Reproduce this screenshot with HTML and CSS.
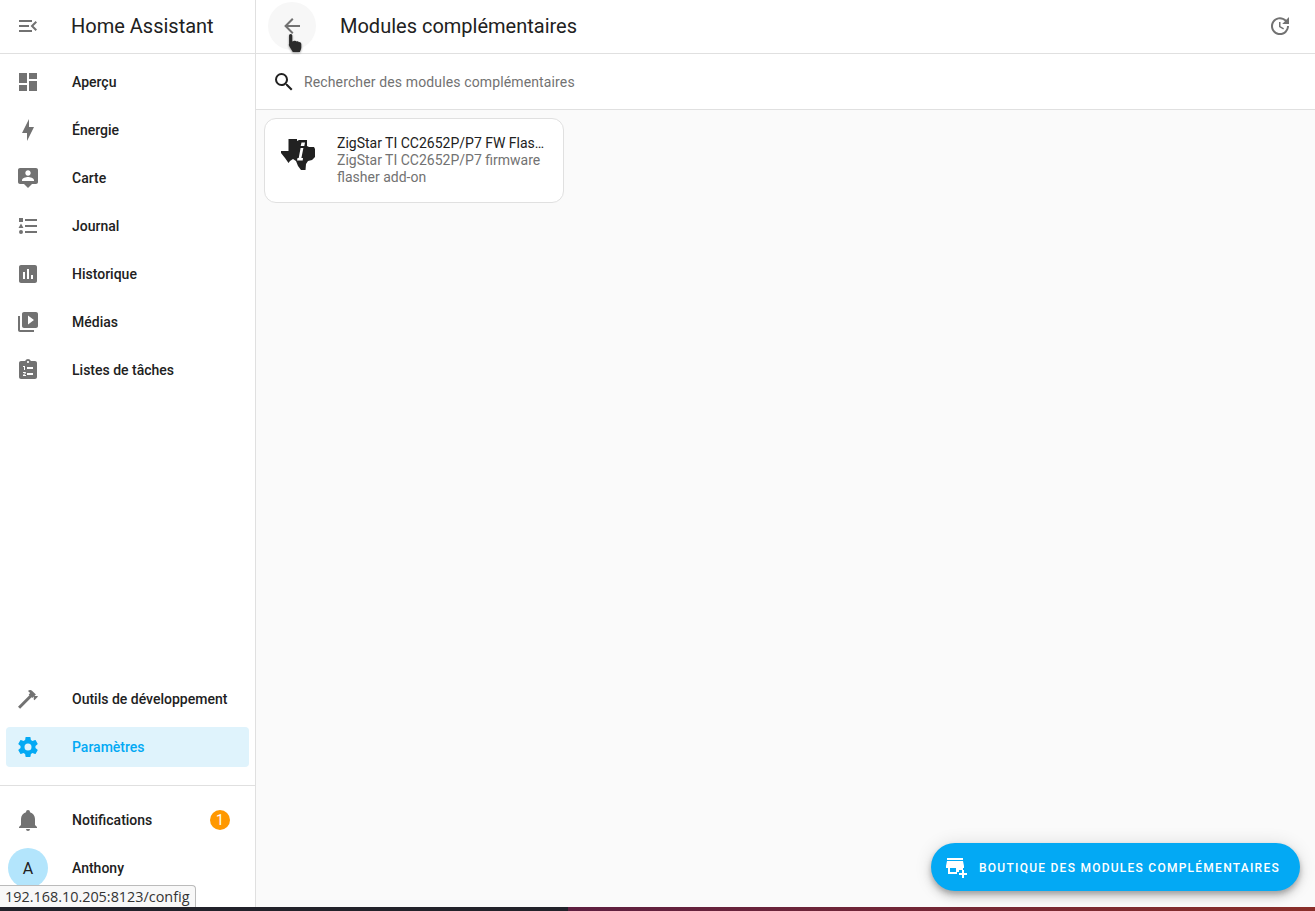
FILE: index.html
```html
<!DOCTYPE html>
<html lang="fr">
<head>
    <meta charset="UTF-8">
    <title>Modules complémentaires</title>
    <link rel="stylesheet" href="styles.css">
</head>
<body>
    <div class="app">
        <aside class="sidebar">
            <div class="menu-head">
                <svg class="icon" viewBox="0 0 24 24"><path d="M21 15.61L19.59 17L14.58 12L19.59 7L21 8.39L17.44 12L21 15.61M3 6H16V8H3V6M3 13V11H13V13H3M3 18V16H16V18H3Z"/></svg>
                <span class="menu-title">Home Assistant</span>
            </div>
            <nav class="nav-main">
                <a class="nav-item"><svg class="icon" viewBox="0 0 24 24"><path d="M13,3V9H21V3M13,21H21V11H13M3,21H11V15H3M3,13H11V3H3V13Z"/></svg><span>Aperçu</span></a>
                <a class="nav-item"><svg class="icon" viewBox="0 0 24 24"><path d="M11 15H6L13 1V9H18L11 23V15Z"/></svg><span>Énergie</span></a>
                <a class="nav-item"><svg class="icon" viewBox="0 0 24 24"><path d="M20 2H4C2.9 2 2 2.9 2 4V16C2 17.1 2.9 18 4 18H8L12 22L16 18H20C21.1 18 22 17.1 22 16V4C22 2.9 21.1 2 20 2M12 4.3C13.5 4.3 14.7 5.5 14.7 7C14.7 8.5 13.5 9.7 12 9.7C10.5 9.7 9.3 8.5 9.3 7C9.3 5.5 10.5 4.3 12 4.3M18 15H6V14.1C6 12.1 10 11 12 11C14 11 18 12.1 18 14.1V15Z"/></svg><span>Carte</span></a>
                <a class="nav-item"><svg class="icon" viewBox="0 0 24 24"><path d="M5,9.5L7.5,14H2.5L5,9.5M3,4H7V8H3V4M5,20A2,2 0 0,0 7,18A2,2 0 0,0 5,16A2,2 0 0,0 3,18A2,2 0 0,0 5,20M9,5V7H21V5H9M9,19H21V17H9V19M9,13H21V11H9V13Z"/></svg><span>Journal</span></a>
                <a class="nav-item"><svg class="icon" viewBox="0 0 24 24"><path d="M19 3H5C3.9 3 3 3.9 3 5V19C3 20.1 3.9 21 5 21H19C20.1 21 21 20.1 21 19V5C21 3.9 20.1 3 19 3M9 17H7V10H9V17M13 17H11V7H13V17M17 17H15V13H17V17Z"/></svg><span>Historique</span></a>
                <a class="nav-item"><svg class="icon" viewBox="0 0 24 24"><path d="M4 6H2V20C2 21.1 2.9 22 4 22H18V20H4V6M20 2H8C6.9 2 6 2.9 6 4V16C6 17.1 6.9 18 8 18H20C21.1 18 22 17.1 22 16V4C22 2.9 21.1 2 20 2M12 14.5V5.5L18 10L12 14.5Z"/></svg><span>Médias</span></a>
                <a class="nav-item"><svg class="icon" viewBox="0 0 24 24"><path d="M19 3H14.82C14.4 1.84 13.3 1 12 1S9.6 1.84 9.18 3H5C3.9 3 3 3.9 3 5V19C3 20.1 3.9 21 5 21H19C20.1 21 21 20.1 21 19V5C21 3.9 20.1 3 19 3M12 3C12.55 3 13 3.45 13 4S12.55 5 12 5 11 4.55 11 4 11.45 3 12 3M7 8H9V12H8V9H7V8M10 17V18H7V17.08L9 15H7V14H9.25C9.66 14 10 14.34 10 14.75C10 14.95 9.92 15.14 9.79 15.27L8.12 17H10M11 9H17V11H11V9M17 17H11V15H17V17Z"/></svg><span>Listes de tâches</span></a>
            </nav>
            <div class="nav-tools">
                <a class="nav-item"><svg class="icon" viewBox="0 0 24 24"><path d="M2 19.63L13.43 8.2L12.72 7.5L14.14 6.07L12 3.89C13.2 2.7 15.09 2.7 16.27 3.89L19.87 7.5L18.45 8.91H21.29L22 9.62L18.45 13.21L17.74 12.5V9.62L16.27 11.04L15.56 10.33L4.13 21.76L2 19.63Z"/></svg><span>Outils de développement</span></a>
                <a class="nav-item active"><svg class="icon" viewBox="0 0 24 24"><path d="M12,15.5A3.5,3.5 0 0,1 8.5,12A3.5,3.5 0 0,1 12,8.5A3.5,3.5 0 0,1 15.5,12A3.5,3.5 0 0,1 12,15.5M19.43,12.97C19.47,12.65 19.5,12.33 19.5,12C19.5,11.67 19.47,11.34 19.43,11L21.54,9.37C21.73,9.22 21.78,8.95 21.66,8.73L19.66,5.27C19.54,5.05 19.27,4.96 19.05,5.05L16.56,6.05C16.04,5.66 15.5,5.32 14.87,5.07L14.5,2.42C14.46,2.18 14.25,2 14,2H10C9.75,2 9.54,2.18 9.5,2.42L9.13,5.07C8.5,5.32 7.96,5.66 7.44,6.05L4.95,5.05C4.73,4.96 4.46,5.05 4.34,5.27L2.34,8.73C2.21,8.95 2.27,9.22 2.46,9.37L4.57,11C4.53,11.34 4.5,11.67 4.5,12C4.5,12.33 4.53,12.65 4.57,12.97L2.46,14.63C2.27,14.78 2.21,15.05 2.34,15.27L4.34,18.73C4.46,18.95 4.73,19.03 4.95,18.95L7.44,17.94C7.96,18.34 8.5,18.68 9.13,18.93L9.5,21.58C9.54,21.82 9.75,22 10,22H14C14.25,22 14.46,21.82 14.5,21.58L14.87,18.93C15.5,18.67 16.04,18.34 16.56,17.94L19.05,18.95C19.27,19.03 19.54,18.95 19.66,18.73L21.66,15.27C21.78,15.05 21.73,14.78 21.54,14.63L19.43,12.97Z"/></svg><span>Paramètres</span></a>
            </div>
            <div class="nav-bottom">
                <a class="nav-item"><svg class="icon" viewBox="0 0 24 24"><path d="M21,19V20H3V19L5,17V11C5,7.9 7.03,5.17 10,4.29C10,4.19 10,4.1 10,4A2,2 0 0,1 12,2A2,2 0 0,1 14,4C14,4.1 14,4.19 14,4.29C16.97,5.17 19,7.9 19,11V17L21,19M14,21A2,2 0 0,1 12,23A2,2 0 0,1 10,21"/></svg><span>Notifications</span><span class="badge">1</span></a>
                <a class="nav-item user"><span class="avatar">A</span><span>Anthony</span></a>
            </div>
        </aside>
        <main class="content">
            <header class="topbar">
                <button class="back-btn"><svg class="icon" viewBox="0 0 24 24"><path d="M20,11V13H8L13.5,18.5L12.08,19.92L4.16,12L12.08,4.08L13.5,5.5L8,11H20Z"/></svg></button>
                <h1>Modules complémentaires</h1>
                <svg class="icon" viewBox="0 0 24 24"><path d="M21,10.12H14.22L16.96,7.3C14.23,4.6 9.81,4.5 7.08,7.2C4.35,9.91 4.35,14.28 7.08,17C9.81,19.7 14.23,19.7 16.96,17C18.32,15.65 19,14.08 19,12.1H21C21,14.08 20.12,16.65 18.36,18.39C14.85,21.87 9.15,21.87 5.64,18.39C2.14,14.92 2.11,9.28 5.62,5.81C9.13,2.34 14.76,2.34 18.27,5.81L21,3V10.12M12.5,8V12.25L16,14.33L15.28,15.54L11,13V8H12.5Z"/></svg>
            </header>
            <div class="search">
                <svg class="icon" viewBox="0 0 24 24"><path d="M9.5,3A6.5,6.5 0 0,1 16,9.5C16,11.11 15.41,12.59 14.44,13.73L14.71,14H15.5L20.5,19L19,20.5L14,15.5V14.71L13.73,14.44C12.59,15.41 11.11,16 9.5,16A6.5,6.5 0 0,1 3,9.5A6.5,6.5 0 0,1 9.5,3M9.5,5C7,5 5,7 5,9.5C5,12 7,14 9.5,14C12,14 14,12 14,9.5C14,7 12,5 9.5,5Z"/></svg>
                <span>Rechercher des modules complémentaires</span>
            </div>
            <section class="cards">
                <article class="card">
                    <svg class="logo" viewBox="0 0 34 34"><path d="M7.5 1H16V3L18 2H26V8L28 9H33L34 11V19L31 22L27 23L25 26L24.5 32H20L17 28L15 23L12 21L9 23L7.5 25L4 20L0 15V13H7.5Z"/><path class="logo-i" d="M20.5 4.5H24L23.3 8H19.7ZM19.6 10H22.4L20.4 20H22L21.7 22.5H16L16.5 20H17.7Z"/></svg>
                    <div class="card-text">
                        <div class="card-title">ZigStar TI CC2652P/P7 FW Flasher</div>
                        <div class="card-desc">ZigStar TI CC2652P/P7 firmware flasher add-on</div>
                    </div>
                </article>
            </section>
            <button class="fab">
                <svg class="icon" viewBox="0 0 24 24"><path fill-rule="evenodd" d="M3 4H19V6H3ZM3 7H19L20 12V14H19V16H15V18H13V20H4V14H2V12ZM6 14V18H12V14ZM18 16H20V19H23V21H20V24H18V21H15V19H18Z"/></svg>
                <span>Boutique des modules complémentaires</span>
            </button>
        </main>
    </div>
    <svg class="cursor" viewBox="0 0 14 18"><path d="M2.5 0.5C3.5 0.5 4 1.2 4 2V7.5L6 7C7 6.8 7.6 7.2 8 7.6C9 7.2 9.8 7.6 10.2 8.2C11.2 8 12.4 8.8 12.4 10V13C12.4 15 11.6 16 11 17.5H4.5L1.5 12.5C0.8 11.4 0.5 10.6 1 10V2C1 1.2 1.6 0.5 2.5 0.5Z"/></svg>
    <div class="status-link">192.168.10.205:8123/config</div>
    <div class="desktop-strip"></div>
</body>
</html>
```

FILE: styles.css
```css
* {
    box-sizing: border-box;
}

html, body {
    height: 100%;
}

body {
    margin: 0;
    font-family: Roboto, "Liberation Sans", sans-serif;
    background: #fafafa;
    color: #212121;
    overflow: hidden;
}

.icon {
    width: 24px;
    height: 24px;
    fill: #727272;
    flex-shrink: 0;
}

.app {
    display: flex;
    height: 907px;
}

.sidebar {
    width: 256px;
    display: flex;
    flex-direction: column;
    background: white;
    border-right: 1px solid #e0e0e0;
    flex-shrink: 0;
}

.menu-head {
    height: 54px;
    display: flex;
    align-items: center;
    padding: 0 0 1px 16px;
    border-bottom: 1px solid #e0e0e0;
}

.menu-title {
    margin-left: 31px;
    font-size: 20px;
}

.nav-main {
    flex: 1;
    display: flex;
    flex-direction: column;
    gap: 8px;
    padding-top: 8px;
}

.nav-item {
    height: 40px;
    margin: 0 6px;
    padding-left: 10px;
    display: flex;
    align-items: center;
    border-radius: 4px;
    font-size: 14px;
    font-weight: 500;
}

.nav-item > span:first-of-type {
    margin-left: 32px;
}

.nav-tools {
    display: flex;
    flex-direction: column;
    gap: 8px;
    padding-bottom: 18px;
    border-bottom: 1px solid #e0e0e0;
}

.nav-item.active {
    background: #dff3fc;
    color: #03a9f4;
}

.active .icon {
    fill: #03a9f4;
}

.nav-bottom {
    display: flex;
    flex-direction: column;
    gap: 8px;
    padding-top: 14px;
    height: 121px;
}

.badge {
    width: 20px;
    height: 20px;
    margin-left: auto;
    margin-right: 19px;
    border-radius: 50%;
    background: #ff9800;
    color: white;
    font-weight: 400;
    text-align: center;
    line-height: 20px;
}

.nav-item.user {
    padding-left: 2px;
}

.nav-item.user > span:first-of-type {
    margin-left: 0;
}

.avatar {
    width: 40px;
    height: 40px;
    margin-right: 24px;
    border-radius: 50%;
    background: #b3e5fc;
    font-size: 16px;
    font-weight: 400;
    display: flex;
    align-items: center;
    justify-content: center;
}

.content {
    flex: 1;
    min-width: 0;
    position: relative;
}

.topbar {
    height: 54px;
    display: flex;
    align-items: center;
    padding: 0 23px 1px 12px;
    background: white;
    border-bottom: 1px solid #e0e0e0;
}

.back-btn {
    width: 48px;
    height: 48px;
    padding: 12px;
    border: 0;
    border-radius: 50%;
    background: #f7f7f7;
}

h1 {
    margin: 0 0 0 24px;
    flex: 1;
    font-size: 20px;
    font-weight: 400;
}

.search {
    height: 56px;
    display: flex;
    align-items: center;
    padding-left: 16px;
    background: white;
    border-bottom: 1px solid #e0e0e0;
    font-size: 14px;
    letter-spacing: 0.13px;
    color: #727272;
}

.search .icon {
    fill: #212121;
    margin-right: 8px;
}

.cards {
    padding: 8px;
}

.card {
    width: 300px;
    height: 85px;
    display: flex;
    padding: 16px;
    background: white;
    border: 1px solid #e0e0e0;
    border-radius: 12px;
}

.logo {
    width: 34px;
    height: 34px;
    margin-top: 3px;
    fill: #212121;
    flex-shrink: 0;
}

.logo-i {
    fill: white;
}

.card-text {
    min-width: 0;
    margin-left: 22px;
    font-size: 14px;
    line-height: 17px;
}

.card-title {
    width: 209px;
    white-space: nowrap;
    overflow: hidden;
    text-overflow: ellipsis;
}

.card-desc {
    color: #727272;
}

.fab {
    position: absolute;
    right: 15px;
    bottom: 16px;
    height: 48px;
    width: 369px;
    display: flex;
    align-items: center;
    padding: 0 20px 0 13px;
    border: 0;
    border-radius: 24px;
    background: #03a9f4;
    color: white;
    font-family: inherit;
    font-size: 12px;
    font-weight: 500;
    letter-spacing: 1.25px;
    text-transform: uppercase;
    box-shadow: 0 3px 5px rgba(0,0,0,0.2), 0 6px 10px rgba(0,0,0,0.14), 0 1px 18px rgba(0,0,0,0.12);
}

.fab span {
    margin-top: 2px;
}

.fab .icon {
    fill: white;
    margin: 0 11px 2px 0;
}

.cursor {
    position: absolute;
    left: 288px;
    top: 33px;
    width: 15px;
    height: 20px;
    fill: #2b2b2b;
    filter: drop-shadow(0 1px 1px rgba(0,0,0,0.4));
}

.status-link {
    position: absolute;
    left: 0;
    bottom: 4px;
    height: 22px;
    padding: 0 5px 0 5px;
    background: #f8f8f8;
    border: 1px solid #bbb;
    border-left: 0;
    border-bottom: 0;
    border-radius: 0 4px 0 0;
    font-family: "Open Sans", sans-serif;
    font-size: 14.4px;
    line-height: 21px;
    color: #333;
}

.desktop-strip {
    height: 4px;
    background: linear-gradient(to right, #22222a 0%, #22222a 568px, #5e1f40 568px, #8a2f2a 100%);
}
```
